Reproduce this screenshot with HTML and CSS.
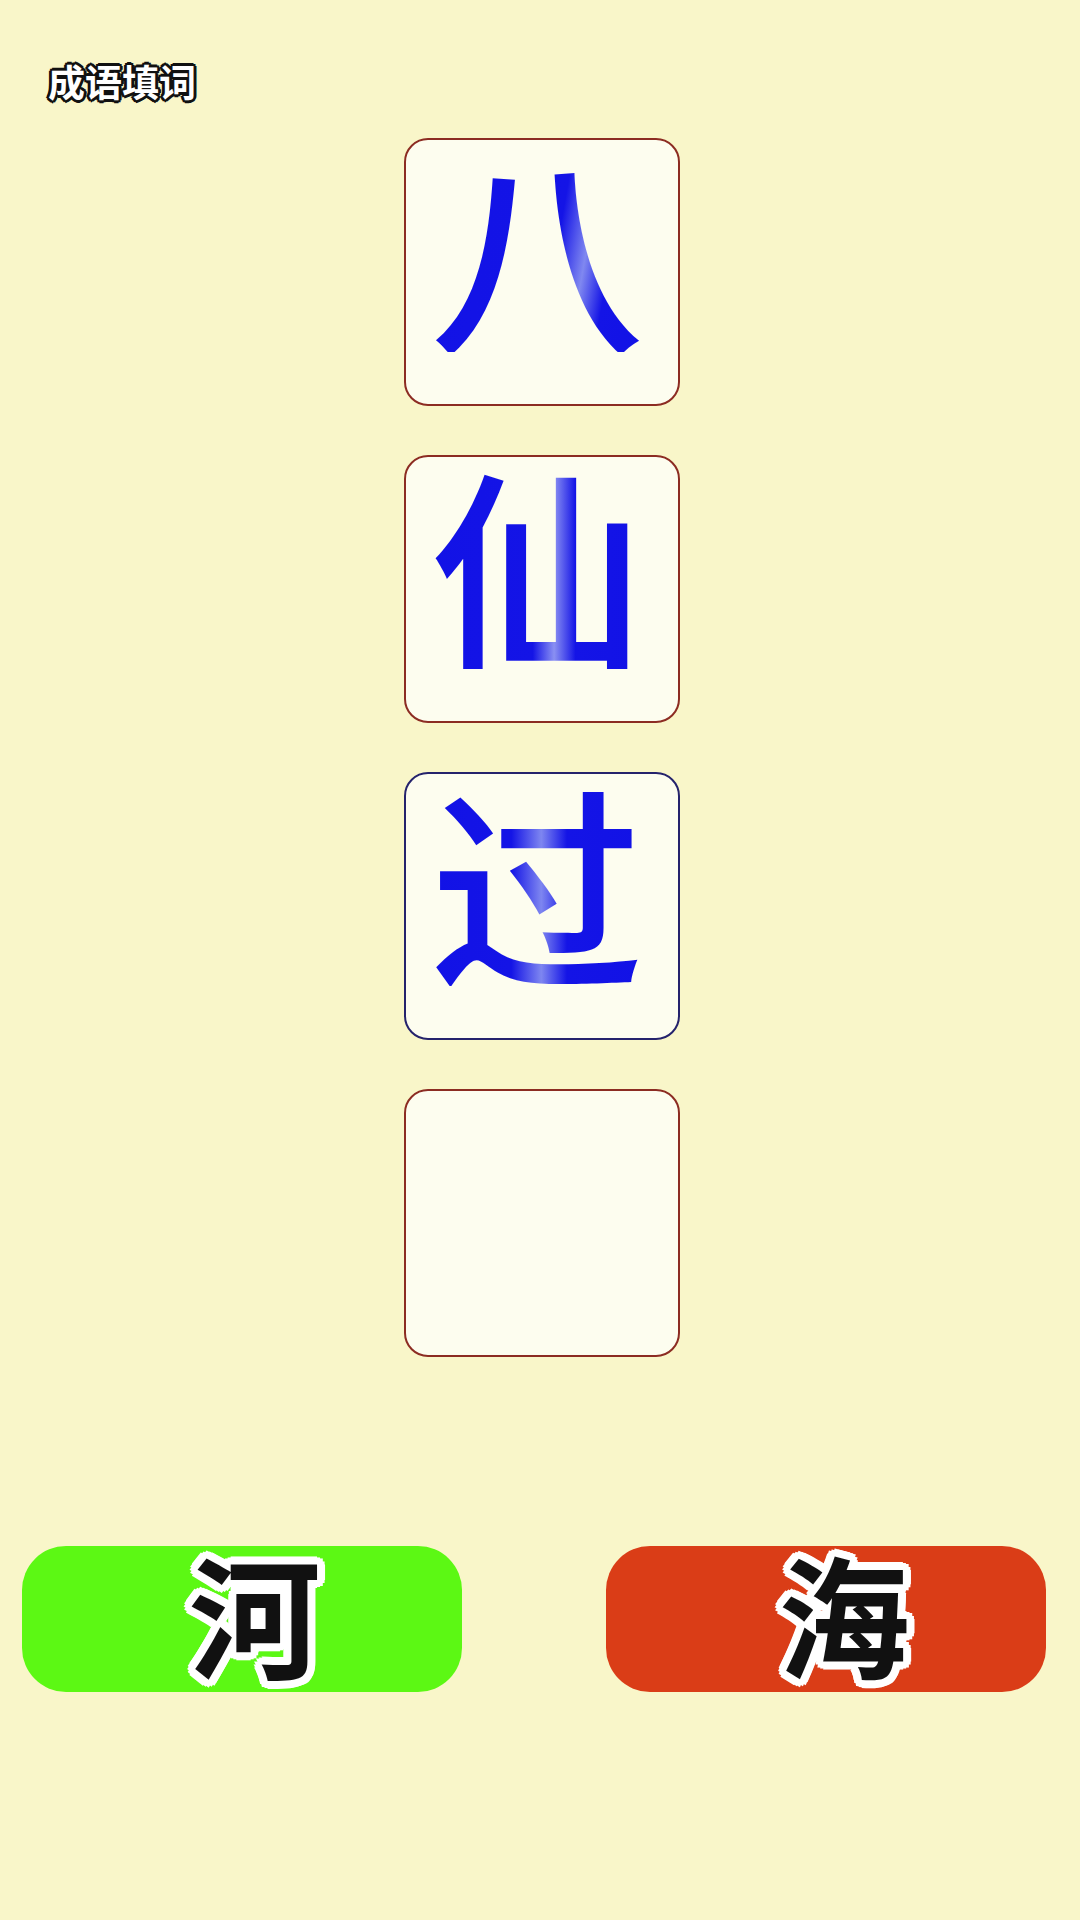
FILE: index.html
```html
<!DOCTYPE html>
<html lang="zh">
<head>
<meta charset="utf-8">
<title>成语填词</title>
<link rel="stylesheet" href="styles.css">
</head>
<body>
<div class="page">
  <header class="header">
    <h1 class="title">成语填词</h1>
  </header>
  <main class="cards">
    <div class="card"><span class="char shine-a">八</span></div>
    <div class="card"><span class="char shine-b">仙</span></div>
    <div class="card card-active"><span class="char shine-c">过</span></div>
    <div class="card"><span class="char"></span></div>
  </main>
  <div class="choices">
    <button class="choice choice-green"><span class="choice-text">河</span></button>
    <button class="choice choice-red"><span class="choice-text">海</span></button>
  </div>
</div>
</body>
</html>
```
FILE: styles.css
```css
html, body {
  margin: 0;
  padding: 0;
}
body {
  width: 1080px;
  height: 1920px;
  background: #f9f6c9;
  font-family: "Noto Sans CJK SC", "Noto Sans", sans-serif;
  overflow: hidden;
}
.page {
  display: flex;
  flex-direction: column;
  height: 1920px;
}
.header {
  padding: 61px 0 0 48px;
  height: 40px;
}
.title {
  margin: 0;
  font-size: 37px;
  line-height: 40px;
  font-weight: 700;
  color: #ffffff;
  letter-spacing: 0;
  text-shadow:
    3px 0 0 #111, -3px 0 0 #111, 0 3px 0 #111, 0 -3px 0 #111,
    2.1px 2.1px 0 #111, -2.1px 2.1px 0 #111, 2.1px -2.1px 0 #111, -2.1px -2.1px 0 #111,
    1.5px 0 0 #111, -1.5px 0 0 #111, 0 1.5px 0 #111, 0 -1.5px 0 #111,
    0 0 2px #111;
}
.cards {
  margin-top: 37px;
  display: flex;
  flex-direction: column;
  align-items: center;
  gap: 49px;
  padding-left: 4px;
}
.card {
  box-sizing: border-box;
  width: 276px;
  height: 268px;
  border: 2px solid #8c2c22;
  border-radius: 24px;
  background: #fdfdef;
  display: flex;
  align-items: center;
  justify-content: center;
}
.card-active {
  border-color: #25236c;
}
.char {
  font-size: 214px;
  font-weight: 500;
  line-height: 1;
  margin: -54px 10px 0 0;
  color: #1414e6;
  background: linear-gradient(90deg, #1212e6 0%, #1414e6 48%, #8a90f2 58%, #1414e6 70%, #1212e6 100%);
  -webkit-background-clip: text;
  background-clip: text;
  -webkit-text-fill-color: transparent;
}
.shine-a {
  background: linear-gradient(100deg, #1212e6 0%, #1414e6 58%, #8088f0 70%, #1414e6 80%, #1212e6 100%);
  -webkit-background-clip: text;
  background-clip: text;
}
.shine-b {
  background: linear-gradient(90deg, #1212e6 0%, #1414e6 48%, #8a90f2 58%, #1414e6 68%, #1212e6 100%);
  -webkit-background-clip: text;
  background-clip: text;
}
.shine-c {
  background: linear-gradient(90deg, #1212e6 0%, #1414e6 38%, #7e86f0 52%, #1414e6 64%, #1212e6 100%);
  -webkit-background-clip: text;
  background-clip: text;
}
.choices {
  margin-top: 189px;
  display: flex;
  justify-content: space-between;
  padding: 0 34px 0 22px;
}
.choice {
  width: 440px;
  height: 146px;
  border: none;
  border-radius: 44px;
  padding: 0 0 0 26px;
  display: flex;
  align-items: center;
  justify-content: center;
  font-family: inherit;
}
.choice-green {
  background: #5cf814;
}
.choice-red {
  background: #da3d17;
  padding-left: 36px;
}
.choice-text {
  font-size: 132px;
  font-weight: 700;
  line-height: 1;
  color: #111111;
  margin-top: -14px;
  text-shadow:
    8px 0 0 #fff, 7.4px 3.1px 0 #fff, 5.7px 5.7px 0 #fff, 3.1px 7.4px 0 #fff,
    0 8px 0 #fff, -3.1px 7.4px 0 #fff, -5.7px 5.7px 0 #fff, -7.4px 3.1px 0 #fff,
    -8px 0 0 #fff, -7.4px -3.1px 0 #fff, -5.7px -5.7px 0 #fff, -3.1px -7.4px 0 #fff,
    0 -8px 0 #fff, 3.1px -7.4px 0 #fff, 5.7px -5.7px 0 #fff, 7.4px -3.1px 0 #fff,
    4px 0 0 #fff, -4px 0 0 #fff, 0 4px 0 #fff, 0 -4px 0 #fff,
    2.8px 2.8px 0 #fff, -2.8px 2.8px 0 #fff, 2.8px -2.8px 0 #fff, -2.8px -2.8px 0 #fff,
    0 0 3px #fff;
}
```
